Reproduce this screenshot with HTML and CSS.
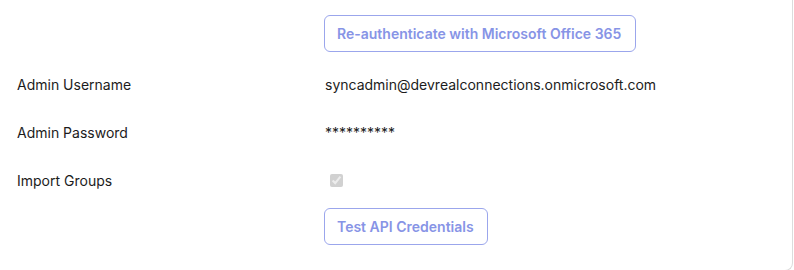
FILE: index.html
```html
<!DOCTYPE html>
<html>
<head>
<meta charset="utf-8">
<link rel="stylesheet" href="styles.css">
</head>
<body>
<div class="card">
  <div class="form">
    <div class="label"></div>
    <div class="value btn-row"><button class="btn btn-wide">Re-authenticate with Microsoft Office 365</button></div>

    <div class="label field">Admin Username</div>
    <div class="value field">syncadmin@devrealconnections.onmicrosoft.com</div>

    <div class="label field">Admin Password</div>
    <div class="value field">**********</div>

    <div class="label field">Import Groups</div>
    <div class="value field"><input type="checkbox" class="check" checked disabled></div>

    <div class="label"></div>
    <div class="value btn-row2"><button class="btn">Test API Credentials</button></div>
  </div>
</div>
</body>
</html>
```
FILE: styles.css
```css
html, body {
  margin: 0;
  padding: 0;
  background: #ffffff;
}
body {
  font-family: Inter, "Liberation Sans", sans-serif;
  font-size: 14px;
  color: #1c1c1c;
}
.card {
  width: 792px;
  height: 270px;
  border-right: 1px solid #dcdcdc;
  border-bottom: 1px solid #dcdcdc;
  border-bottom-right-radius: 8px;
  box-sizing: content-box;
}
.form {
  display: grid;
  grid-template-columns: 308px 1fr;
  padding: 15px 0 0 17px;
}
.field {
  height: 48px;
  display: flex;
  align-items: center;
}
.btn-row {
  margin-bottom: 8px;
}
.btn-row2 {
  margin-top: 4px;
}
.btn {
  font-family: Inter, "Liberation Sans", sans-serif;
  font-size: 14px;
  font-weight: 600;
  color: #8794e6;
  background: #ffffff;
  border: 1px solid #9ba6ec;
  border-radius: 6px;
  height: 37px;
  padding: 0 13px 0 12px;
  margin-left: -1px;
  cursor: pointer;
}
.btn-wide {
  padding: 0 14px 0 12px;
}
.check {
  margin: 0 0 0 5px;
  width: 13px;
  height: 13px;
}
```
